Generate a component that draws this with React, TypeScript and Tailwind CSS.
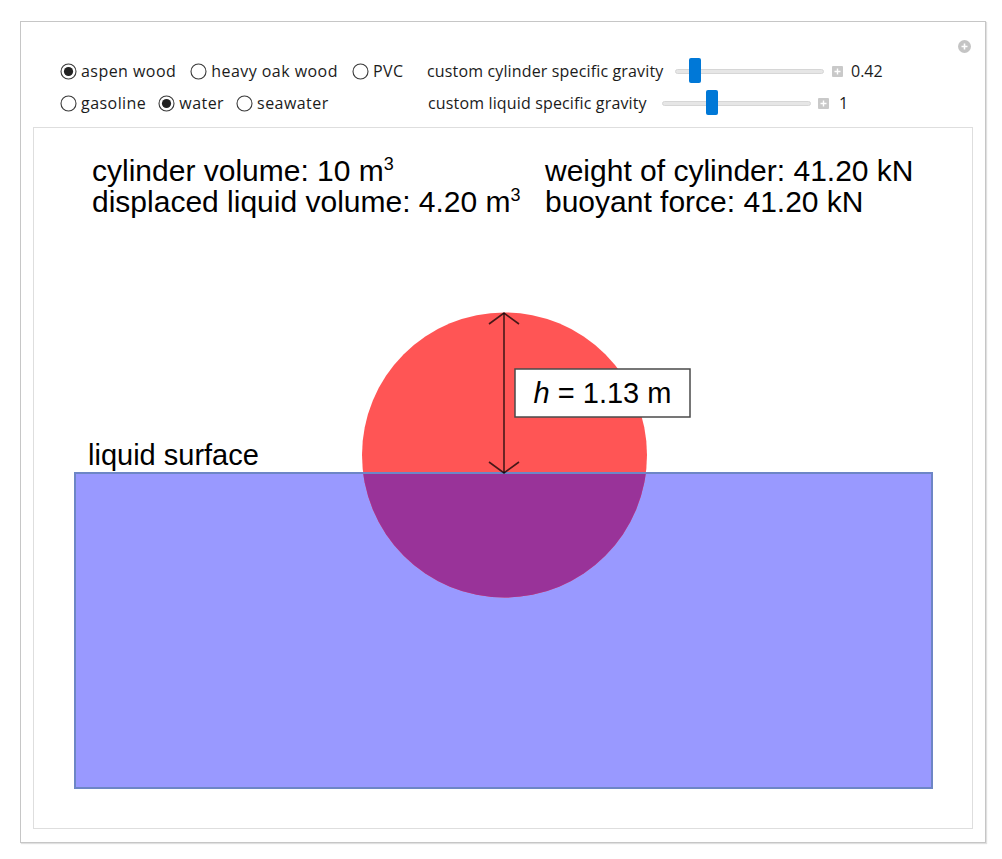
import React from "react";

const ui = { fontFamily: '"Open Sans", "Noto Sans", sans-serif' };
const arial = { fontFamily: '"Liberation Sans", Arial, sans-serif' };

const Radio: React.FC<{ label: string; checked?: boolean }> = ({ label, checked }) => (
  <label className="flex items-center">
    <svg width="17" height="17" viewBox="0 0 17 17" className="shrink-0">
      <circle cx="8.5" cy="8.5" r="7.5" fill="#fff" stroke="#3a3a3a" strokeWidth="1.1" />
      {checked && <circle cx="8.5" cy="8.5" r="4.6" fill="#222" />}
    </svg>
    <span className="ml-[4px] text-[16px] tracking-[0.45px] text-[#1b1b1b]">{label}</span>
  </label>
);

const Slider: React.FC<{
  label: string;
  labelW: string;
  thumb: number;
  value: string;
  gapA: string;
  gapB: string;
  gapC: string;
}> = ({ label, labelW, thumb, value, gapA, gapB, gapC }) => (
  <div className="flex h-[32px] items-center text-[16px] text-[#1b1b1b]">
    <span className={`${labelW} whitespace-nowrap tracking-[0.15px]`}>{label}</span>
    <div className={`relative h-[32px] w-[149px] ${gapA}`}>
      <div className="absolute left-0 right-0 top-[14px] h-[5px] rounded-full border border-[#d6d6d6] bg-[#e6e6e6]" />
      <div
        className="absolute top-[3px] h-[25px] w-[12px] rounded-[2px] bg-[#0078d7]"
        style={{ left: thumb }}
      />
    </div>
    <div className={`flex h-[11px] w-[11px] items-center justify-center rounded-[1px] bg-[#c9c9c9] ${gapB}`}>
      <svg width="7" height="7" viewBox="0 0 7 7">
        <path d="M3.5 0.5v6M0.5 3.5h6" stroke="#fff" strokeWidth="1.4" />
      </svg>
    </div>
    <span className={gapC}>{value}</span>
  </div>
);

const Stat: React.FC<{ children: React.ReactNode }> = ({ children }) => <div>{children}</div>;

export default function App() {
  return (
    <div className="min-h-screen bg-white pt-[21px] pl-[20px]">
      <div
        className="relative flex h-[822px] w-[966px] flex-col border border-[#c6c6c6] shadow-[1px_1px_1px_rgba(0,0,0,0.12)]"
        style={ui}
      >
        {/* add-on button */}
        <div className="absolute right-[14px] top-[18px] flex h-[13px] w-[13px] items-center justify-center rounded-full bg-[#c4c4c4]">
          <svg width="7" height="7" viewBox="0 0 7 7">
            <path d="M3.5 0.5v6M0.5 3.5h6" stroke="#fff" strokeWidth="1.6" />
          </svg>
        </div>

        {/* controls */}
        <div className="flex pl-[39px] pt-[33px]">
          <div className="w-[367px]">
            <div className="flex h-[32px] items-center gap-[14px]">
              <Radio label="aspen wood" checked />
              <Radio label="heavy oak wood" />
              <Radio label="PVC" />
            </div>
            <div className="flex h-[32px] items-center gap-[12px]">
              <Radio label="gasoline" />
              <Radio label="water" checked />
              <Radio label="seawater" />
            </div>
          </div>
          <div>
            <Slider
              label="custom cylinder specific gravity"
              labelW="w-[235px]"
              thumb={14}
              value="0.42"
              gapA="ml-[13px]"
              gapB="ml-[8px]"
              gapC="ml-[8px]"
            />
            <div className="ml-[1px]">
              <Slider
                label="custom liquid specific gravity"
                labelW="w-[222px]"
                thumb={44}
                value="1"
                gapA="ml-[12px]"
                gapB="ml-[7px]"
                gapC="ml-[10px]"
              />
            </div>
          </div>
        </div>

        {/* output panel */}
        <div className="mx-[12px] mt-[8px] flex h-[702px] flex-col border border-[#dedede] bg-white" style={arial}>
          <div className="flex pl-[58px] pt-[27px] text-[30px] leading-[31px] text-black">
            <div className="w-[453px]">
              <Stat>
                cylinder volume: 10 m<sup className="-top-[11px] text-[18px]">3</sup>
              </Stat>
              <Stat>
                displaced liquid volume: 4.20 m<sup className="-top-[11px] text-[18px]">3</sup>
              </Stat>
            </div>
            <div>
              <Stat>weight of cylinder: 41.20 kN</Stat>
              <Stat>buoyant force: 41.20 kN</Stat>
            </div>
          </div>

          <svg width="938" height="611" viewBox="0 0 938 611" className="block">
            <defs>
              <clipPath id="below">
                <rect x="0" y="256" width="938" height="400" />
              </clipPath>
            </defs>
            <rect x="41" y="256" width="857" height="315" fill="#9999ff" />
            <circle cx="470.5" cy="238" r="142.5" fill="#ff5555" />
            <circle cx="470.5" cy="238" r="142.5" fill="#993399" clipPath="url(#below)" />
            <rect x="41" y="256" width="857" height="315" fill="none" stroke="#6d86c6" strokeWidth="2" />
            <g stroke="#000" strokeOpacity="0.72" strokeWidth="1.6" fill="none">
              <path d="M470 96V256" />
              <path d="M455 107L470 96L485 107" />
              <path d="M455 245L470 256L485 245" />
            </g>
            <rect x="481" y="152" width="175" height="48" fill="#fff" stroke="#4a4a4a" strokeWidth="1.5" />
            <text x="568.5" y="186" textAnchor="middle" fontSize="29" fill="#000" style={arial}>
              <tspan fontStyle="italic">h</tspan> = 1.13 m
            </text>
            <text x="54" y="248" fontSize="29" fill="#000" style={arial}>
              liquid surface
            </text>
          </svg>
        </div>
      </div>
    </div>
  );
}
